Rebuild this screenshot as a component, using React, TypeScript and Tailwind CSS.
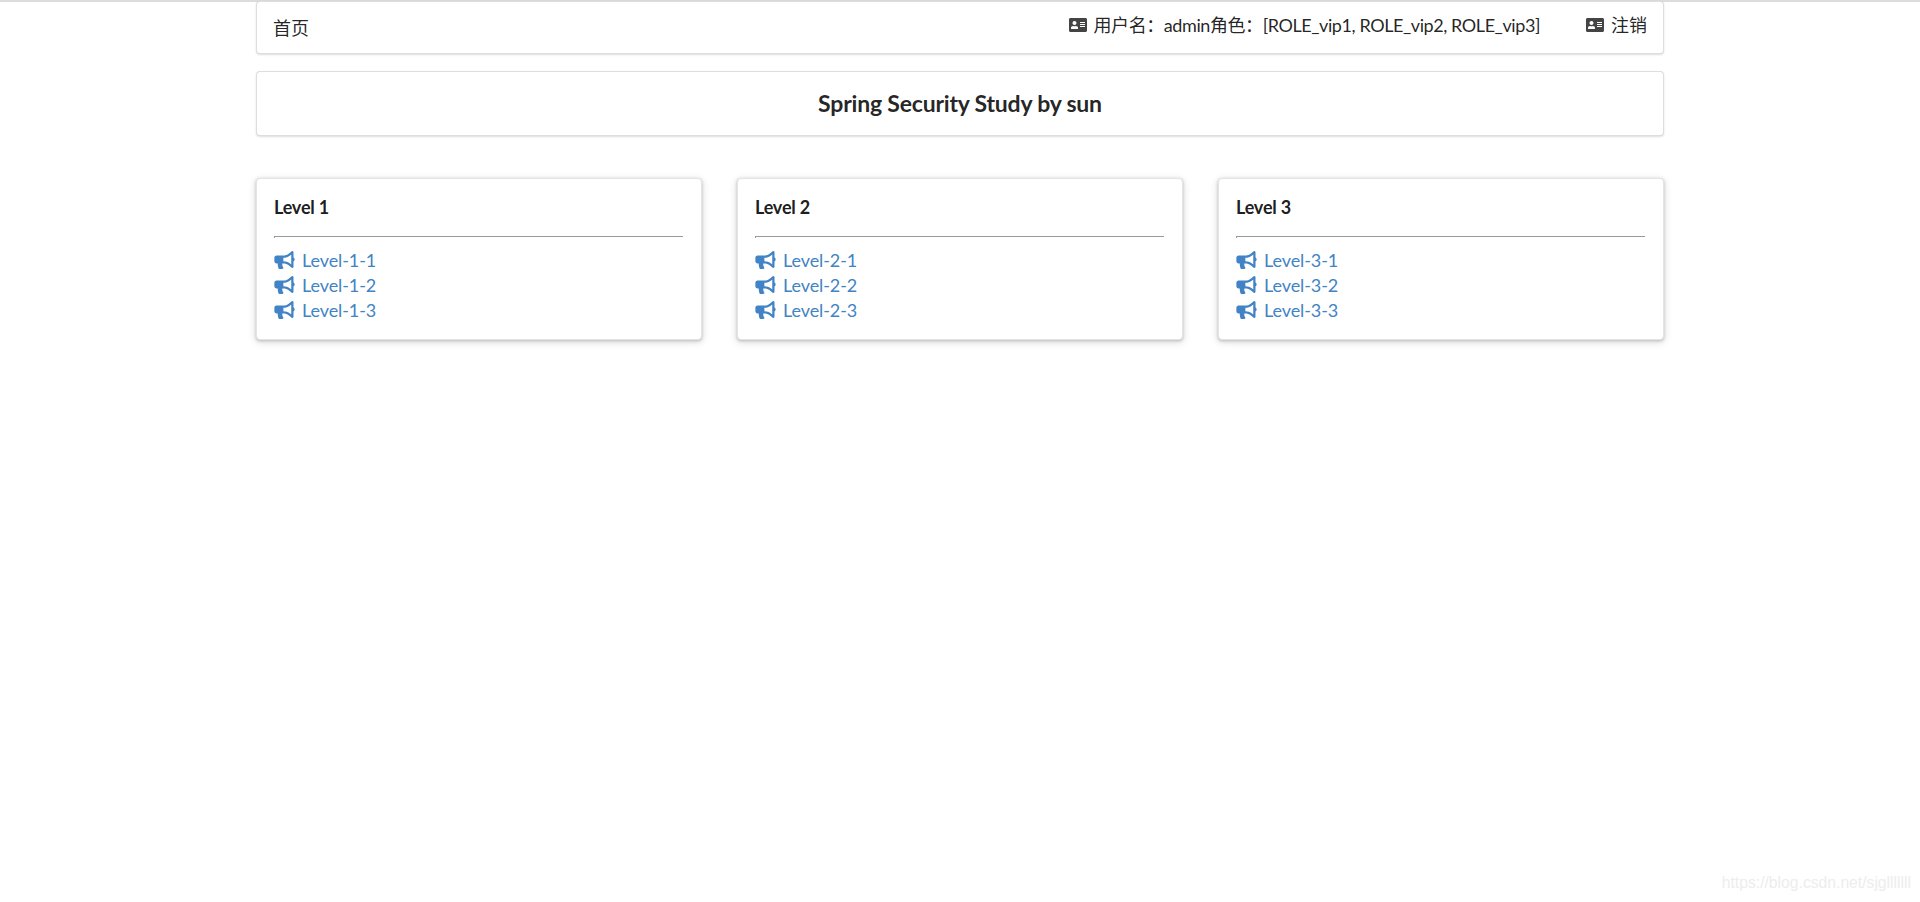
import React from 'react';
import { FaAddressCard, FaBullhorn } from 'react-icons/fa';

const LEVELS = [1, 2, 3];
const ITEMS = [1, 2, 3];

const segment = 'bg-white border border-[#22242626] rounded-[4px] shadow-[0_1px_2px_0_#22242626]';

export default function App() {
  return (
    <div className="relative min-h-[902px] bg-white font-['Lato','Noto_Sans_CJK_SC',sans-serif] text-[18px] text-[#000000de]">
      <div className="h-[2px] bg-[#dcdcdc]" />

      <div className="w-[1408px] mx-auto">
        {/* Top menu */}
        <div className={`${segment} h-[53px] -mt-[1px] flex justify-between pl-[16px] pr-[16px]`}>
          <a className="pt-[13px] leading-[26px]">首页</a>
          <div className="flex">
            <span className="flex items-start pt-[10px] leading-[26px] tracking-[-0.42px]">
              <FaAddressCard className="w-[18px] h-[18px] mt-[4px] mr-[7px] text-[#444]" />
              用户名：admin角色：[ROLE_vip1, ROLE_vip2, ROLE_vip3]
            </span>
            <span className="flex items-start pt-[10px] leading-[26px] ml-[46px]">
              <FaAddressCard className="w-[18px] h-[18px] mt-[4px] mr-[7px] text-[#444]" />
              注销
            </span>
          </div>
        </div>

        {/* Title */}
        <div className={`${segment} mt-[17px] h-[65px] flex items-center justify-center`}>
          <h3 className="text-[23px] font-bold tracking-[-0.2px] text-[#000000de] leading-none">Spring Security Study by sun</h3>
        </div>

        {/* Level cards */}
        <div className="grid grid-cols-3 gap-[35px] mt-[42px]">
          {LEVELS.map((level) => (
            <div
              key={level}
              className="bg-white border border-[#e4e4e5] rounded-[4px] h-[162px] pl-[17px] pr-[18px] pt-[15px] shadow-[0_1px_3px_0_#bcbdbd,0_2px_8px_0_#00000026]"
            >
              <div className="text-[18px] font-bold tracking-[-0.2px] leading-[26px] text-[#000000e6]">Level {level}</div>
              <hr className="mt-[16px] mb-[9.5px] h-[2px] border-t border-l border-[#999] border-b-0" />
              <div>
                {ITEMS.map((item) => (
                  <a key={item} className="flex items-center h-[25px] text-[#4183c4] text-[18px] tracking-[-0.1px]">
                    <FaBullhorn className="w-[21px] h-[18px] mr-[7px]" />
                    Level-{level}-{item}
                  </a>
                ))}
              </div>
            </div>
          ))}
        </div>
      </div>

      {/* CSDN watermark */}
      <div className="absolute right-[9px] top-[873px] font-['Liberation_Sans',sans-serif] text-[15.7px] leading-[20px] text-[#ededed]">
        https://blog.csdn.net/sjglllllll
      </div>
    </div>
  );
}
